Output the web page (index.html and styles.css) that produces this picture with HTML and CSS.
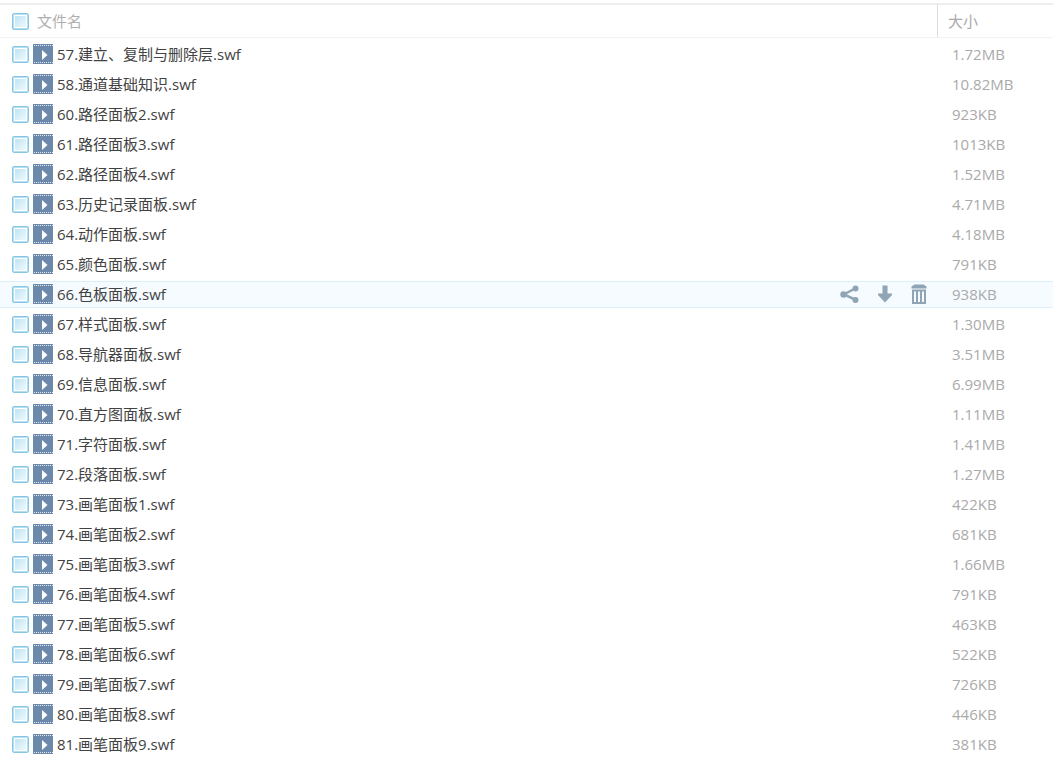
FILE: index.html
```html
<!DOCTYPE html>
<html lang="zh-CN">
<head>
<meta charset="utf-8">
<title>文件列表</title>
<link rel="stylesheet" href="styles.css">
</head>
<body>
<svg class="sprites" aria-hidden="true">
  <symbol id="film" viewBox="0 0 20 20">
    <path fill="#6c88aa" d="M0 0h20v20H0z"/>
    <path stroke="#e3eaf2" stroke-width="1" stroke-dasharray="1 1" d="M1 1.5h19M1 18.5h19"/>
    <path fill="#fff" d="M9 6v10l5.500-5z"/>
  </symbol>
</svg>
<table class="files">
  <thead>
    <tr>
      <th class="name" scope="col"><div class="cell"><input class="check" type="checkbox" id="all"><label class="heading" for="all">文件名</label></div></th>
      <th class="size" scope="col">大小</th>
    </tr>
  </thead>
  <tbody id="rows"></tbody>
</table>
<template id="actions">
  <div class="actions">
    <button class="action" type="button" aria-label="分享"><svg width="20" height="20" viewBox="0 0 20 20"><path d="M15 4.500 4 10.500l11 5" fill="none" stroke="#93a7b6" stroke-width="2.500"/><g fill="#8fa4b4"><circle cx="15.500" cy="4.500" r="3"/><circle cx="3.500" cy="10.500" r="3.200"/><circle cx="15.500" cy="16" r="3"/></g></svg></button>
    <button class="action" type="button" aria-label="下载"><svg width="20" height="20" viewBox="0 0 20 20"><path d="M7.500 1.500h5v8h4.500v1.500l-7 7.500-7-7.500V9.500h4.500z" fill="#8fa4b4"/></svg></button>
    <button class="action" type="button" aria-label="删除"><svg width="20" height="20" viewBox="0 0 20 20"><path d="M1.500 4.500V2.500L4.500 .5h9l3 2v2z" fill="#8fa4b4"/><path d="M3 6.500h12v12.500H3zM7 7v12M11 7v12" fill="none" stroke="#8fa4b4" stroke-width="2"/></svg></button>
  </div>
</template>
<script src="files.js"></script>
</body>
</html>
```
FILE: styles.css
```css
body {
  margin: 0;
  background: #fff;
  color: #424242;
  font-family: "Open Sans", "Noto Sans CJK SC", sans-serif;
  font-size: 15px;
  line-height: 20px;
}

.sprites {
  display: none;
}

.files {
  width: 100%;
  table-layout: fixed;
  border-collapse: separate;
  border-spacing: 0 3px;
}

.files th,
.files td {
  box-sizing: border-box;
  padding: 0;
  text-align: left;
  font-weight: 400;
}

.files th {
  height: 35px;
  border-top: 2px solid #eee;
  border-bottom: 1px solid #f3f3f3;
  color: #b0b0b0;
}

.files td {
  height: 27px;
  padding-bottom: 1px;
  border-top: 1px solid transparent;
  border-bottom: 1px solid transparent;
}

.files .size {
  width: 116px;
  color: #aaa;
}

.files th.size {
  padding-left: 10px;
  border-left: 1px solid #ddd;
}

.files td.size {
  padding-left: 15px;
}

.active td {
  background: #f5fbff;
  border-color: #d9f0fa;
}

.cell {
  display: flex;
  align-items: center;
  padding-left: 12px;
}

.check {
  appearance: none;
  flex: none;
  box-sizing: border-box;
  width: 17px;
  height: 17px;
  margin: 0;
  border: 1px solid #85c8e6;
  border-radius: 2px;
  background: linear-gradient(135deg, #b5e0f2, #f8fdff);
  box-shadow: inset 0 0 0 1px #b5def0, inset 0 0 0 2px #fff;
}

.heading {
  margin-left: 8px;
}

.film {
  flex: none;
  width: 20px;
  height: 20px;
  margin: 0 4px;
}

.actions {
  display: flex;
  gap: 15px;
  margin-left: auto;
  padding-right: 7px;
}

.action {
  width: 20px;
  height: 20px;
  padding: 0;
  border: 0;
  background: none;
}

.action svg {
  display: block;
}
```
FILE: files.js
```js
const files = [
  ["57.建立、复制与删除层.swf", "1.72MB"],
  ["58.通道基础知识.swf", "10.82MB"],
  ["60.路径面板2.swf", "923KB"],
  ["61.路径面板3.swf", "1013KB"],
  ["62.路径面板4.swf", "1.52MB"],
  ["63.历史记录面板.swf", "4.71MB"],
  ["64.动作面板.swf", "4.18MB"],
  ["65.颜色面板.swf", "791KB"],
  ["66.色板面板.swf", "938KB"],
  ["67.样式面板.swf", "1.30MB"],
  ["68.导航器面板.swf", "3.51MB"],
  ["69.信息面板.swf", "6.99MB"],
  ["70.直方图面板.swf", "1.11MB"],
  ["71.字符面板.swf", "1.41MB"],
  ["72.段落面板.swf", "1.27MB"],
  ["73.画笔面板1.swf", "422KB"],
  ["74.画笔面板2.swf", "681KB"],
  ["75.画笔面板3.swf", "1.66MB"],
  ["76.画笔面板4.swf", "791KB"],
  ["77.画笔面板5.swf", "463KB"],
  ["78.画笔面板6.swf", "522KB"],
  ["79.画笔面板7.swf", "726KB"],
  ["80.画笔面板8.swf", "446KB"],
  ["81.画笔面板9.swf", "381KB"]
];
const activeIndex = 8;
const body = document.getElementById("rows");

files.forEach(([name, size], i) => {
  const row = body.insertRow();
  row.innerHTML = `<td class="name"><div class="cell"><input class="check" type="checkbox" id="f${i}"><svg class="film" aria-hidden="true"><use href="#film"/></svg><label for="f${i}">${name}</label></div></td><td class="size">${size}</td>`;
  if (i === activeIndex) {
    row.className = "active";
    row.querySelector(".cell").append(document.getElementById("actions").content.cloneNode(true));
  }
});
```
